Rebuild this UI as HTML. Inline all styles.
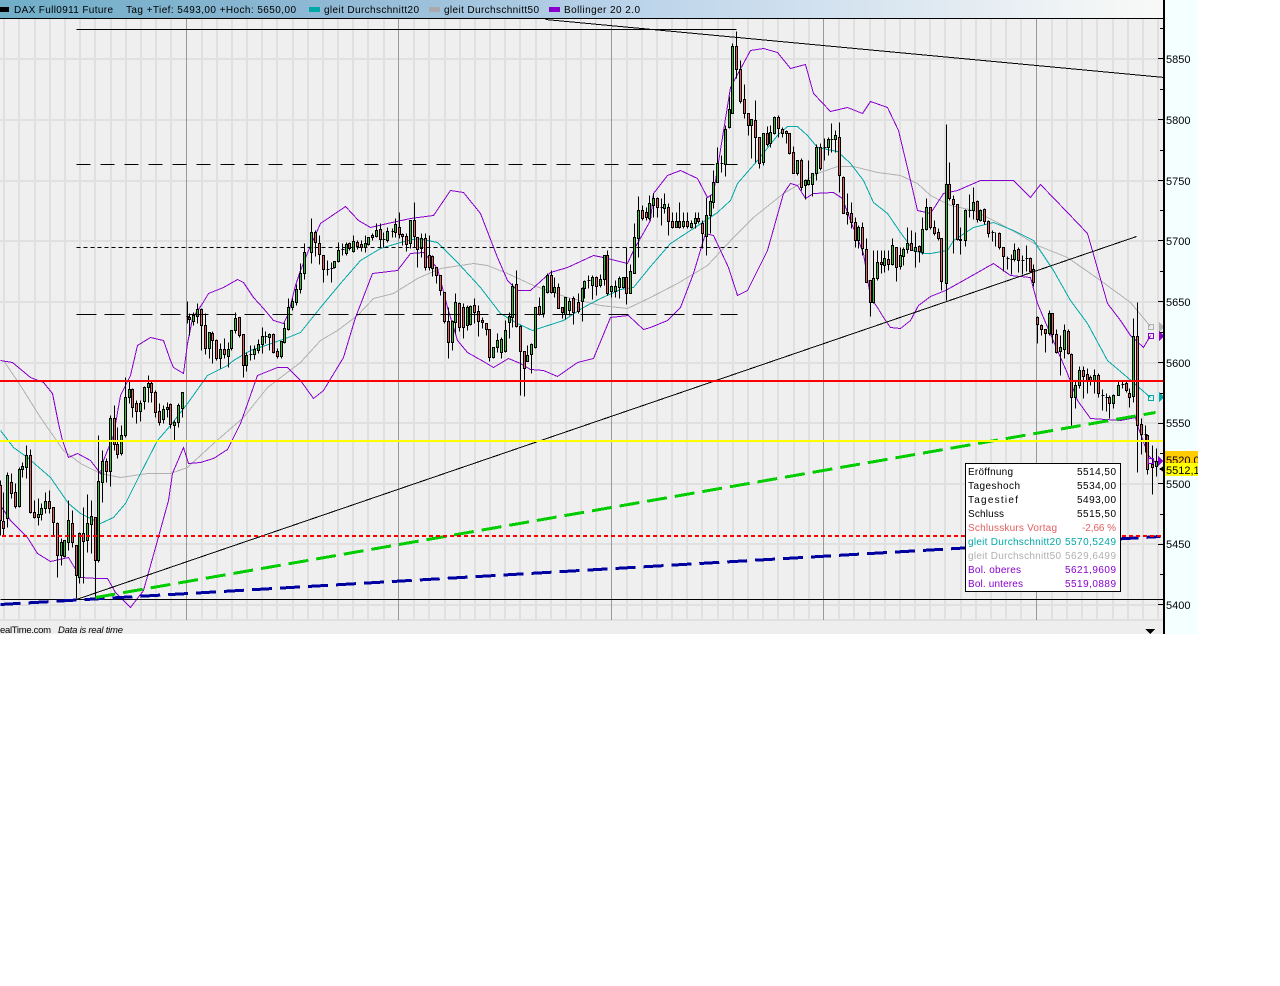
<!DOCTYPE html>
<html>
<head>
<meta charset="utf-8">
<title>DAX Full0911 Future</title>
<style>
html,body{margin:0;padding:0;background:#fff;width:1280px;height:986px;overflow:hidden}
svg{display:block}
text{font-family:"Liberation Sans",sans-serif;font-size:10px;fill:#000}
</style>
</head>
<body>
<svg width="1280" height="986" viewBox="0 0 1280 986" xmlns="http://www.w3.org/2000/svg">
<defs>
<linearGradient id="hdr" gradientUnits="userSpaceOnUse" x1="0" y1="0" x2="1164" y2="0">
<stop offset="0" stop-color="#70aec8"/>
<stop offset=".28" stop-color="#8fb8d4"/>
<stop offset=".55" stop-color="#bcd4ea"/>
<stop offset=".95" stop-color="#f4f6f6"/>
<stop offset="1" stop-color="#f8f8f8"/>
</linearGradient>
<clipPath id="chart"><rect x="0" y="19" width="1164" height="601"/></clipPath>
<clipPath id="lab"><rect x="1165" y="440" width="33" height="40"/></clipPath>
</defs>

<rect x="0" y="0" width="1198" height="634" fill="#f4ffff"/>
<rect x="0" y="19" width="1164" height="615" fill="#efefef"/>
<rect x="0" y="0" width="1164" height="18" fill="url(#hdr)"/>

<!-- grid -->
<g shape-rendering="crispEdges">
<path stroke="#e0e0e0" stroke-width="2" fill="none" d="M4 19V620M19 19V620M35 19V620M50 19V620M65 19V620M80 19V620M95 19V620M111 19V620M126 19V620M141 19V620M156 19V620M171 19V620M202 19V620M217 19V620M232 19V620M247 19V620M262 19V620M277 19V620M293 19V620M308 19V620M323 19V620M338 19V620M353 19V620M368 19V620M384 19V620M414 19V620M429 19V620M445 19V620M460 19V620M475 19V620M490 19V620M505 19V620M520 19V620M536 19V620M551 19V620M566 19V620M581 19V620M596 19V620M627 19V620M642 19V620M657 19V620M672 19V620M687 19V620M702 19V620M718 19V620M733 19V620M748 19V620M763 19V620M778 19V620M794 19V620M809 19V620M839 19V620M854 19V620M870 19V620M885 19V620M900 19V620M915 19V620M930 19V620M945 19V620M961 19V620M976 19V620M991 19V620M1006 19V620M1021 19V620M1052 19V620M1067 19V620M1082 19V620M1097 19V620M1113 19V620M1128 19V620M1143 19V620M1158 19V620"/>
<path stroke="#e0e0e0" stroke-width="2" fill="none" d="M0 59H1164M0 120H1164M0 181H1164M0 241H1164M0 302H1164M0 363H1164M0 423H1164M0 484H1164M0 544H1164M0 605H1164M0 620H1164"/>
<path transform="translate(-.5,0)" stroke="#999" stroke-width="1" fill="none" d="M187 19V620M399 19V620M612 19V620M824 19V620M1037 19V620"/>
</g>

<g clip-path="url(#chart)" shape-rendering="crispEdges" fill="none">
<g transform="translate(.5,.5)">
<!-- MA50 gray -->
<polyline stroke="#b0b0b0" points="3,360 20,385 40,417 63,450 80,463 100,473 120,477 147,473 170,473 187,467 213,443 243,417 267,387 300,362 320,340 337,330 357,315 373,298 393,293 417,278 440,268 473,263 487,265 507,273 533,285 567,297 600,305 627,308 650,297 677,283 707,265 733,237 753,217 783,193 817,173 837,166 853,166 877,172 900,175 917,183 930,195 950,205 973,210 997,222 1017,233 1037,245 1067,257 1100,280 1130,302 1150,326"/>
<!-- MA20 teal -->
<polyline stroke="#00a8a8" points="0,430 13,447 27,457 50,477 68,503 80,513 100,523 113,517 125,503 140,473 157,440 170,425 187,403 207,375 227,365 233,360 250,350 265,345 285,338 300,332 320,307 340,283 360,260 380,248 400,242 417,238 437,242 457,262 480,287 500,313 517,323 532,330 563,320 583,307 600,298 620,289 633,287 650,266 670,243 693,228 717,212 730,200 737,183 757,160 777,135 787,126 797,126 807,135 817,147 837,151 850,163 863,180 873,202 887,213 900,232 913,250 923,253 930,253 947,250 953,240 973,227 993,222 1013,230 1033,240 1053,270 1070,300 1087,323 1107,360 1127,377 1150,397"/>
<!-- Bollinger upper -->
<polyline stroke="#8800cc" points="0,360 12,362 30,377 43,382 52,393 58,423 62,440 68,457 77,453 90,460 100,473 103,460 113,435 120,395 130,375 137,345 150,337 163,340 170,360 173,367 183,373 187,343 192,318 202,303 208,293 223,287 237,279 243,282 253,297 263,308 273,320 283,323 288,313 295,285 300,270 308,250 320,223 345,206 358,220 370,227 387,223 410,218 433,215 450,190 463,192 480,213 497,257 507,280 517,290 530,290 550,272 567,267 593,255 603,257 627,263 633,250 650,220 653,193 667,175 680,170 697,178 707,197 713,193 730,87 750,50 763,48 777,52 790,68 805,64 813,93 830,111 847,107 862,113 870,101 887,107 898,130 910,180 917,210 930,213 943,193 957,190 980,180 1013,180 1030,197 1040,184 1067,212 1087,233 1107,303 1120,320 1130,335 1143,347 1150,335"/>
<!-- Bollinger lower -->
<polyline stroke="#8800cc" points="0,505 10,520 27,537 37,553 50,561 68,557 80,577 97,578 107,578 115,592 130,607 143,590 157,540 168,500 172,473 183,447 188,463 200,462 213,458 227,449 240,423 257,375 277,367 287,367 300,380 313,398 323,390 343,357 355,317 372,273 397,270 410,253 423,252 437,268 447,307 457,340 467,352 483,361 493,367 508,358 520,363 530,369 543,370 557,376 577,362 593,358 610,317 628,315 643,329 650,327 667,320 680,307 693,273 705,233 713,235 728,267 737,295 747,290 767,250 783,193 790,183 797,185 805,198 813,193 833,192 842,198 850,220 863,253 870,297 877,307 883,317 890,327 900,328 910,320 918,305 930,296 945,290 963,280 993,263 1010,275 1030,277 1037,303 1057,350 1067,373 1077,400 1090,418 1120,420 1135,417 1137,425 1148,455 1158,465"/>

<!-- wicks -->
<path stroke="#000" d="M0 480V535M3 492V535M7 472V527M11 473V498M15 483V508M19 467V507M22 462V477M26 445V478M30 449V513M34 500V518M38 498V525M41 503V520M45 492V513M49 490V513M53 507V535M57 522V577M61 538V565M64 540V557M68 500V550M72 510V547M76 545V598M79 532V583M83 507V583M87 494V552M91 500V553M95 517V598M98 435V562M102 450V502M106 458V482M110 415V486M114 405V450M117 427V458M121 425V455M125 377V437M129 380V403M132 388V417M136 400V423M140 400V421M144 386V409M148 375V402M151 381V402M155 390V417M159 403V425M163 405V423M167 402V417M170 403V428M174 420V440M178 403V427M182 392V417"/>
<path stroke="#000" d="M187 301V323M186 316h3M189 313V335M193 312V325M197 303V323M201 308V350M205 313V354M209 332V358M212 331V363M216 339V360M220 343V368M224 338V358M228 342V367M231 330V350M235 312V333M239 317V337M243 334V377M246 352V371M250 345V360M249 354h3M254 345V359M258 339V353M262 327V353M265 331V343M264 336h3M269 333V350M273 333V353M277 348V358M281 341V358M284 322V343M288 298V330M292 298V310M296 284V305M300 263V293M304 243V279"/>
<path stroke="#000" d="M311 218V263M315 230V256M319 235V264M323 255V282M327 260V275M326 269h3M331 262V282M330 268h3M334 261V268M338 242V262M342 243V255M341 249h3M346 242V255M349 242V250M353 235V252M357 240V249M361 240V251M365 235V252M368 237V245M372 233V240M376 223V237M380 223V247M383 232V247M382 239h3M387 227V242M392 228V237M391 231h3M395 218V237M399 212V238M402 233V245M406 233V251M410 220V248M414 202V247M417 237V267M421 233V257M425 233V270M429 235V270M432 255V276M436 267V283M440 275V295M444 292V323M448 307V358M452 320V350M455 293V333M459 302V331M463 303V338M467 305V330M470 305V325M474 298V323M478 305V336M482 317V328M486 323V335M489 329V361M493 347V358M497 333V352M501 337V358M505 320V352M509 312V338M512 283V327M516 270V327M520 325V395M524 352V396M527 345V361M531 343V373M535 307V348M539 297V315M543 285V317M547 273V293M551 270V293M554 277V297M558 283V308M562 307V318M565 297V319M569 298V315M573 296V324M578 293V313M582 287V321M584 280V298M588 275V288M587 280h3M592 275V299M596 276V295M600 274V287M604 255V285M607 250V295M611 285V297M615 280V297M619 276V298M623 277V288M626 247V304M630 264V293M634 223V273M638 196V257M642 205V220M646 207V220M649 195V220"/>
<path stroke="#000" d="M653 193V217M657 197V217M661 198V225M660 207h3M664 193V213M668 203V235M672 212V228M676 212V227M679 202V228M683 212V228M687 212V228M691 220V228M695 212V228M698 212V223M702 220V248M706 197V255M710 195V233M713 170V208M717 147V182M721 155V172M720 163h3M725 125V176M729 96V128M732 43V113M736 31V78M740 60V103M744 84V118M748 113V135M751 119V158M755 100V162M759 137V168M763 133V165M767 126V146M770 125V147M774 116V134M778 115V137M782 127V137M786 130V143M789 133V154M793 146V173M797 160V175M801 158V190M805 179V199M808 160V185M812 173V196M816 144V180M820 143V170M824 138V160M823 147h3M828 137V155M831 123V152M830 139h3M835 130V152M839 122V192M843 176V213M847 193V224M851 202V228M855 217V247M858 225V248M862 222V255M866 238V282M870 280V316M873 250V303M877 250V280M881 250V273M884 250V272M888 250V270M892 238V265M896 247V281M900 247V269M903 247V265M907 227V253M911 230V250M915 232V267M919 245V262M922 217V254M926 198V230M930 207V229M934 220V235M938 228V240M941 238V290M946 124V300M949 162V200M953 195V253M957 204V240M960 227V254M965 209V246M969 194V217M968 210h3M973 187V219M977 200V222M980 209V221M984 208V224M988 220V237M992 230V241M991 232h3M995 232V246M999 232V249M1003 247V271M1007 256V269M1006 258h3M1011 254V274M1010 259h3M1014 243V261M1018 247V272M1022 255V274M1021 260h3M1026 245V271M1025 258h3M1030 257V272M1033 264V286M1037 316V343M1041 324V335M1045 329V352M1049 310V335M1052 313V343M1056 329V353M1060 335V375M1064 324V358M1068 329V354M1071 353V427M1075 381V408M1079 366V388M1083 366V398M1087 368V393M1090 375V385M1094 369V393M1098 373V397M1102 389V410M1101 395h3M1106 393V411M1105 397h3M1109 395V418M1113 394V408M1118 381V395M1122 380V388M1121 384h3M1126 380V392M1129 388V407M1133 318V402M1137 302V472M1141 418V454M1145 425V452M1144 434h3M1147 435V474M1152 445V494M1156 448V476"/>

<!-- green bodies -->
<path fill="#32c032" stroke="#000" d="M6 475h2v43h-2zM18 469h2v37h-2zM21 466h2v3h-2zM25 455h2v12h-2zM37 514h2v3h-2zM40 508h2v6h-2zM44 501h2v7h-2zM60 542h2v13h-2zM63 540h2v16h-2zM67 520h2v22h-2zM78 533h2v44h-2zM86 523h2v17h-2zM90 516h2v8h-2zM97 481h2v79h-2zM101 461h2v21h-2zM109 418h2v53h-2zM120 435h2v18h-2zM124 397h2v38h-2zM128 389h2v8h-2zM139 403h2v8h-2zM143 387h2v14h-2zM147 383h2v4h-2zM162 409h2v10h-2zM166 407h2v2h-2zM173 422h2v3h-2zM177 405h2v17h-2zM181 392h2v16h-2zM192 315h2v6h-2zM196 309h2v7h-2zM208 332h2v16h-2zM219 349h2v9h-2zM227 349h2v7h-2zM230 330h2v18h-2zM234 318h2v12h-2zM245 355h2v10h-2zM253 349h2v5h-2zM257 344h2v6h-2zM261 336h2v8h-2zM268 334h2v3h-2zM280 341h2v15h-2zM283 328h2v14h-2zM287 307h2v22h-2zM291 301h2v6h-2zM295 289h2v13h-2zM299 273h2v16h-2zM303 252h2v21h-2zM310 232h2v20h-2zM333 261h2v6h-2zM337 250h2v11h-2zM345 244h2v9h-2zM352 241h2v10h-2zM364 243h2v4h-2zM367 237h2v7h-2zM371 235h2v2h-2zM375 230h2v6h-2zM386 231h2v9h-2zM394 224h2v8h-2zM409 220h2v23h-2zM420 238h2v10h-2zM451 321h2v21h-2zM454 302h2v20h-2zM466 307h2v18h-2zM469 306h2v18h-2zM492 347h2v10h-2zM496 340h2v7h-2zM500 339h2v13h-2zM504 330h2v21h-2zM508 316h2v6h-2zM511 286h2v31h-2zM526 355h2v6h-2zM530 344h2v10h-2zM534 307h2v40h-2zM542 286h2v27h-2zM546 275h2v17h-2zM553 287h2v5h-2zM564 297h2v17h-2zM568 301h2v9h-2zM581 288h2v13h-2zM583 281h2v7h-2zM591 277h2v8h-2zM599 279h2v6h-2zM603 255h2v24h-2zM610 286h2v5h-2zM614 286h2v5h-2zM618 278h2v9h-2zM622 277h2v10h-2zM629 271h2v22h-2zM633 237h2v36h-2zM637 210h2v28h-2zM648 203h2v15h-2zM652 198h2v7h-2zM663 204h2v4h-2zM675 221h2v6h-2zM682 221h2v5h-2zM690 223h2v4h-2zM694 218h2v5h-2zM705 215h2v21h-2zM709 201h2v14h-2zM712 182h2v20h-2zM716 163h2v19h-2zM724 129h2v35h-2zM728 109h2v18h-2zM731 46h2v67h-2zM750 119h2v6h-2zM762 133h2v29h-2zM769 132h2v11h-2zM773 117h2v16h-2zM796 160h2v13h-2zM804 180h2v5h-2zM807 180h2v4h-2zM811 173h2v11h-2zM815 147h2v26h-2zM827 139h2v8h-2zM834 135h2v4h-2zM857 227h2v13h-2zM872 278h2v24h-2zM876 262h2v16h-2zM883 258h2v7h-2zM891 245h2v19h-2zM899 255h2v11h-2zM902 249h2v7h-2zM906 243h2v6h-2zM914 247h2v4h-2zM921 229h2v23h-2zM925 207h2v22h-2zM945 184h2v99h-2zM964 210h2v30h-2zM972 202h2v8h-2zM979 210h2v10h-2zM1013 250h2v9h-2zM1048 313h2v20h-2zM1059 347h2v4h-2zM1063 330h2v19h-2zM1074 385h2v12h-2zM1078 370h2v15h-2zM1093 375h2v5h-2zM1112 395h2v8h-2zM1117 385h2v10h-2zM1132 336h2v60h-2zM1155 461h2v5h-2z"/>
<!-- red bodies -->
<path fill="#e06060" stroke="#000" d="M-1 485h2v35h-2zM2 521h2v7h-2zM10 482h2v11h-2zM14 492h2v14h-2zM29 455h2v57h-2zM33 512h2v5h-2zM48 501h2v7h-2zM52 507h2v15h-2zM56 523h2v32h-2zM71 523h2v19h-2zM75 545h2v30h-2zM82 533h2v8h-2zM94 517h2v43h-2zM105 461h2v10h-2zM113 418h2v26h-2zM116 444h2v10h-2zM131 389h2v18h-2zM135 403h2v8h-2zM150 383h2v9h-2zM154 392h2v20h-2zM158 411h2v11h-2zM169 404h2v20h-2zM188 317h2v2h-2zM200 309h2v16h-2zM204 325h2v23h-2zM211 333h2v7h-2zM215 340h2v18h-2zM223 349h2v5h-2zM238 317h2v18h-2zM242 334h2v31h-2zM272 334h2v18h-2zM276 351h2v5h-2zM314 232h2v10h-2zM318 243h2v11h-2zM322 255h2v14h-2zM348 243h2v5h-2zM356 242h2v4h-2zM360 244h2v3h-2zM379 229h2v10h-2zM398 227h2v7h-2zM401 234h2v2h-2zM405 236h2v8h-2zM413 220h2v16h-2zM416 237h2v12h-2zM424 238h2v29h-2zM428 255h2v12h-2zM431 256h2v12h-2zM435 267h2v8h-2zM439 275h2v15h-2zM443 292h2v29h-2zM447 321h2v21h-2zM458 303h2v24h-2zM462 307h2v20h-2zM473 305h2v7h-2zM477 311h2v10h-2zM481 320h2v2h-2zM485 323h2v6h-2zM488 329h2v28h-2zM515 284h2v42h-2zM519 326h2v25h-2zM523 351h2v17h-2zM538 306h2v8h-2zM550 275h2v17h-2zM557 287h2v21h-2zM561 307h2v5h-2zM572 298h2v14h-2zM577 302h2v9h-2zM595 277h2v9h-2zM606 255h2v38h-2zM625 277h2v16h-2zM641 210h2v8h-2zM645 212h2v5h-2zM656 198h2v9h-2zM667 207h2v14h-2zM671 221h2v6h-2zM678 221h2v6h-2zM686 221h2v5h-2zM697 218h2v3h-2zM701 223h2v10h-2zM735 46h2v23h-2zM739 69h2v32h-2zM743 99h2v14h-2zM747 113h2v12h-2zM754 120h2v17h-2zM758 137h2v26h-2zM766 133h2v11h-2zM777 117h2v11h-2zM781 129h2v4h-2zM785 131h2v2h-2zM788 133h2v20h-2zM792 152h2v21h-2zM800 160h2v27h-2zM819 147h2v21h-2zM838 137h2v38h-2zM842 177h2v36h-2zM846 212h2v2h-2zM850 213h2v9h-2zM854 222h2v18h-2zM861 227h2v21h-2zM865 249h2v33h-2zM869 280h2v22h-2zM880 262h2v2h-2zM887 259h2v5h-2zM895 247h2v20h-2zM910 243h2v7h-2zM918 246h2v5h-2zM929 207h2v20h-2zM933 227h2v6h-2zM937 232h2v6h-2zM940 238h2v43h-2zM948 184h2v14h-2zM952 199h2v5h-2zM956 204h2v35h-2zM959 239h2v1h-2zM976 201h2v18h-2zM983 209h2v12h-2zM987 221h2v12h-2zM998 233h2v14h-2zM1002 247h2v9h-2zM1017 249h2v11h-2zM1029 258h2v13h-2zM1032 269h2v13h-2zM1036 317h2v7h-2zM1040 325h2v4h-2zM1044 329h2v4h-2zM1051 313h2v21h-2zM1055 334h2v18h-2zM1067 331h2v22h-2zM1070 354h2v43h-2zM1082 370h2v6h-2zM1086 374h2v6h-2zM1089 377h2v3h-2zM1097 375h2v18h-2zM1108 397h2v6h-2zM1125 383h2v7h-2zM1128 393h2v4h-2zM1136 336h2v89h-2zM1140 424h2v10h-2zM1146 435h2v34h-2zM1151 464h2v3h-2z"/>

<!-- drawn lines -->
<path stroke="#000" d="M76 29H736M545 19L1164 77M76 599L1136 236M0 599H1164"/>
<path stroke="#000" stroke-dasharray="14 10" d="M76 164H737"/>
<path stroke="#000" stroke-dasharray="4 3" d="M76 247H737"/>
<path stroke="#000" stroke-dasharray="20 8" d="M76 314H737"/>
<path stroke="#000" stroke-dasharray="14 10" d="M76 381H1164"/>
<path stroke="#0000a0" stroke-width="3" stroke-dasharray="20 8" d="M0 604L1160 536"/>
<path stroke="#00cc00" stroke-width="3" stroke-dasharray="20 8" d="M95 597L1155 412"/>
<!-- end markers -->
<g stroke-width="1">
<rect x="1148" y="324" width="5" height="5" stroke="#b0b0b0"/>
<rect x="1148" y="333" width="5" height="5" stroke="#8800cc"/>
<rect x="1148" y="395" width="5" height="5" stroke="#00a8a8"/>
<rect x="1148" y="458" width="5" height="5" stroke="#8800cc"/>
</g>
</g>
<path stroke="#ff0000" stroke-width="2" d="M0 381H1164"/>
<path stroke="#ffff00" stroke-width="2" d="M0 441H1164"/>
<path stroke="#ff0000" stroke-width="2" stroke-dasharray="4 3" d="M2 536H1162"/>
</g>

<g shape-rendering="crispEdges">
<path fill="#b0b0b0" d="M1159 322l5 5-5 5z"/>
<path fill="#8800cc" d="M1159 331l5 5-5 5z"/>
<path fill="#00a8a8" d="M1159 392l5 5-5 5z"/>
<path fill="#8800cc" d="M1158 456l5 5-5 5z"/>
<path fill="#000" d="M1159 469l5-3v6z"/>
<!-- footer -->
<rect x="0" y="621" width="1164" height="13" fill="#eeeeee"/>
<path fill="#000" d="M1145 629h10l-5 5z"/>
<!-- header rule + axis -->
<rect x="0" y="18" width="1164" height="1" fill="#000"/>
<rect x="1163" y="0" width="2" height="634" fill="#000"/>
<path transform="translate(0,.5)" stroke="#000" fill="none" d="M1158 58h6M1158 119h6M1158 180h6M1158 240h6M1158 301h6M1158 362h6M1158 423h6M1158 483h6M1158 544h6M1158 604h6M1160 28h4M1160 89h4M1160 150h4M1160 210h4M1160 271h4M1160 332h4M1160 393h4M1160 453h4M1160 514h4M1160 574h4"/>
<!-- legend swatches -->
<rect x="0" y="7" width="9" height="5" fill="#000"/>
<rect x="309" y="7" width="11" height="5" fill="#00a8a8"/>
<rect x="429" y="7" width="11" height="5" fill="#aaaaaa"/>
<rect x="549" y="7" width="11" height="5" fill="#8800cc"/>
<!-- price labels -->
<rect x="1165" y="451" width="33" height="12" fill="#ffcc00"/>
<!-- info box -->
<rect x="965.5" y="463.5" width="155" height="128" fill="#fff" stroke="#000"/>
</g>

<!-- header text -->
<text x="14" y="13" textLength="99">DAX Full0911 Future</text>
<text x="126" y="13" textLength="170">Tag +Tief: 5493,00 +Hoch: 5650,00</text>
<text x="324" y="13" textLength="95">gleit Durchschnitt20</text>
<text x="444" y="13" textLength="95">gleit Durchschnitt50</text>
<text x="564" y="13" textLength="76">Bollinger 20 2.0</text>

<!-- axis labels -->
<text x="1166" y="63" style="font-size:11px">5850</text>
<text x="1166" y="124" style="font-size:11px">5800</text>
<text x="1166" y="185" style="font-size:11px">5750</text>
<text x="1166" y="245" style="font-size:11px">5700</text>
<text x="1166" y="306" style="font-size:11px">5650</text>
<text x="1166" y="367" style="font-size:11px">5600</text>
<text x="1166" y="427" style="font-size:11px">5550</text>
<text x="1166" y="488" style="font-size:11px">5500</text>
<text x="1166" y="548" style="font-size:11px">5450</text>
<text x="1166" y="609" style="font-size:11px">5400</text>
<g clip-path="url(#lab)">
<text x="1166" y="464" style="font-size:11px">5520,0</text>
<rect x="1165" y="463" width="33" height="13" fill="#ffff00" shape-rendering="crispEdges"/>
<text x="1166" y="474" style="font-size:11px">5512,1</text>
</g>

<!-- footer text -->
<text x="0" y="633" textLength="51" style="font-size:9.5px">ealTime.com</text>
<text x="58" y="633" textLength="65" style="font-size:9.5px;font-style:italic">Data is real time</text>

<!-- info box text -->
<text x="968" y="475" textLength="45">Eröffnung</text>
<text x="1077" y="475" textLength="39">5514,50</text>
<text x="968" y="489" textLength="52">Tageshoch</text>
<text x="1077" y="489" textLength="39">5534,00</text>
<text x="968" y="503" textLength="50">Tagestief</text>
<text x="1077" y="503" textLength="39">5493,00</text>
<text x="968" y="517" textLength="36">Schluss</text>
<text x="1077" y="517" textLength="39">5515,50</text>
<text x="968" y="531" textLength="89" style="fill:#e06060">Schlusskurs Vortag</text>
<text x="1082" y="531" textLength="34" style="fill:#e06060">-2,66 %</text>
<text x="968" y="545" textLength="93" style="fill:#00a8a8">gleit Durchschnitt20</text>
<text x="1065" y="545" textLength="51" style="fill:#00a8a8">5570,5249</text>
<text x="968" y="559" textLength="93" style="fill:#b0b0b0">gleit Durchschnitt50</text>
<text x="1065" y="559" textLength="51" style="fill:#b0b0b0">5629,6499</text>
<text x="968" y="573" textLength="53" style="fill:#8800cc">Bol. oberes</text>
<text x="1065" y="573" textLength="51" style="fill:#8800cc">5621,9609</text>
<text x="968" y="587" textLength="55" style="fill:#8800cc">Bol. unteres</text>
<text x="1065" y="587" textLength="51" style="fill:#8800cc">5519,0889</text>
</svg>
</body>
</html>
